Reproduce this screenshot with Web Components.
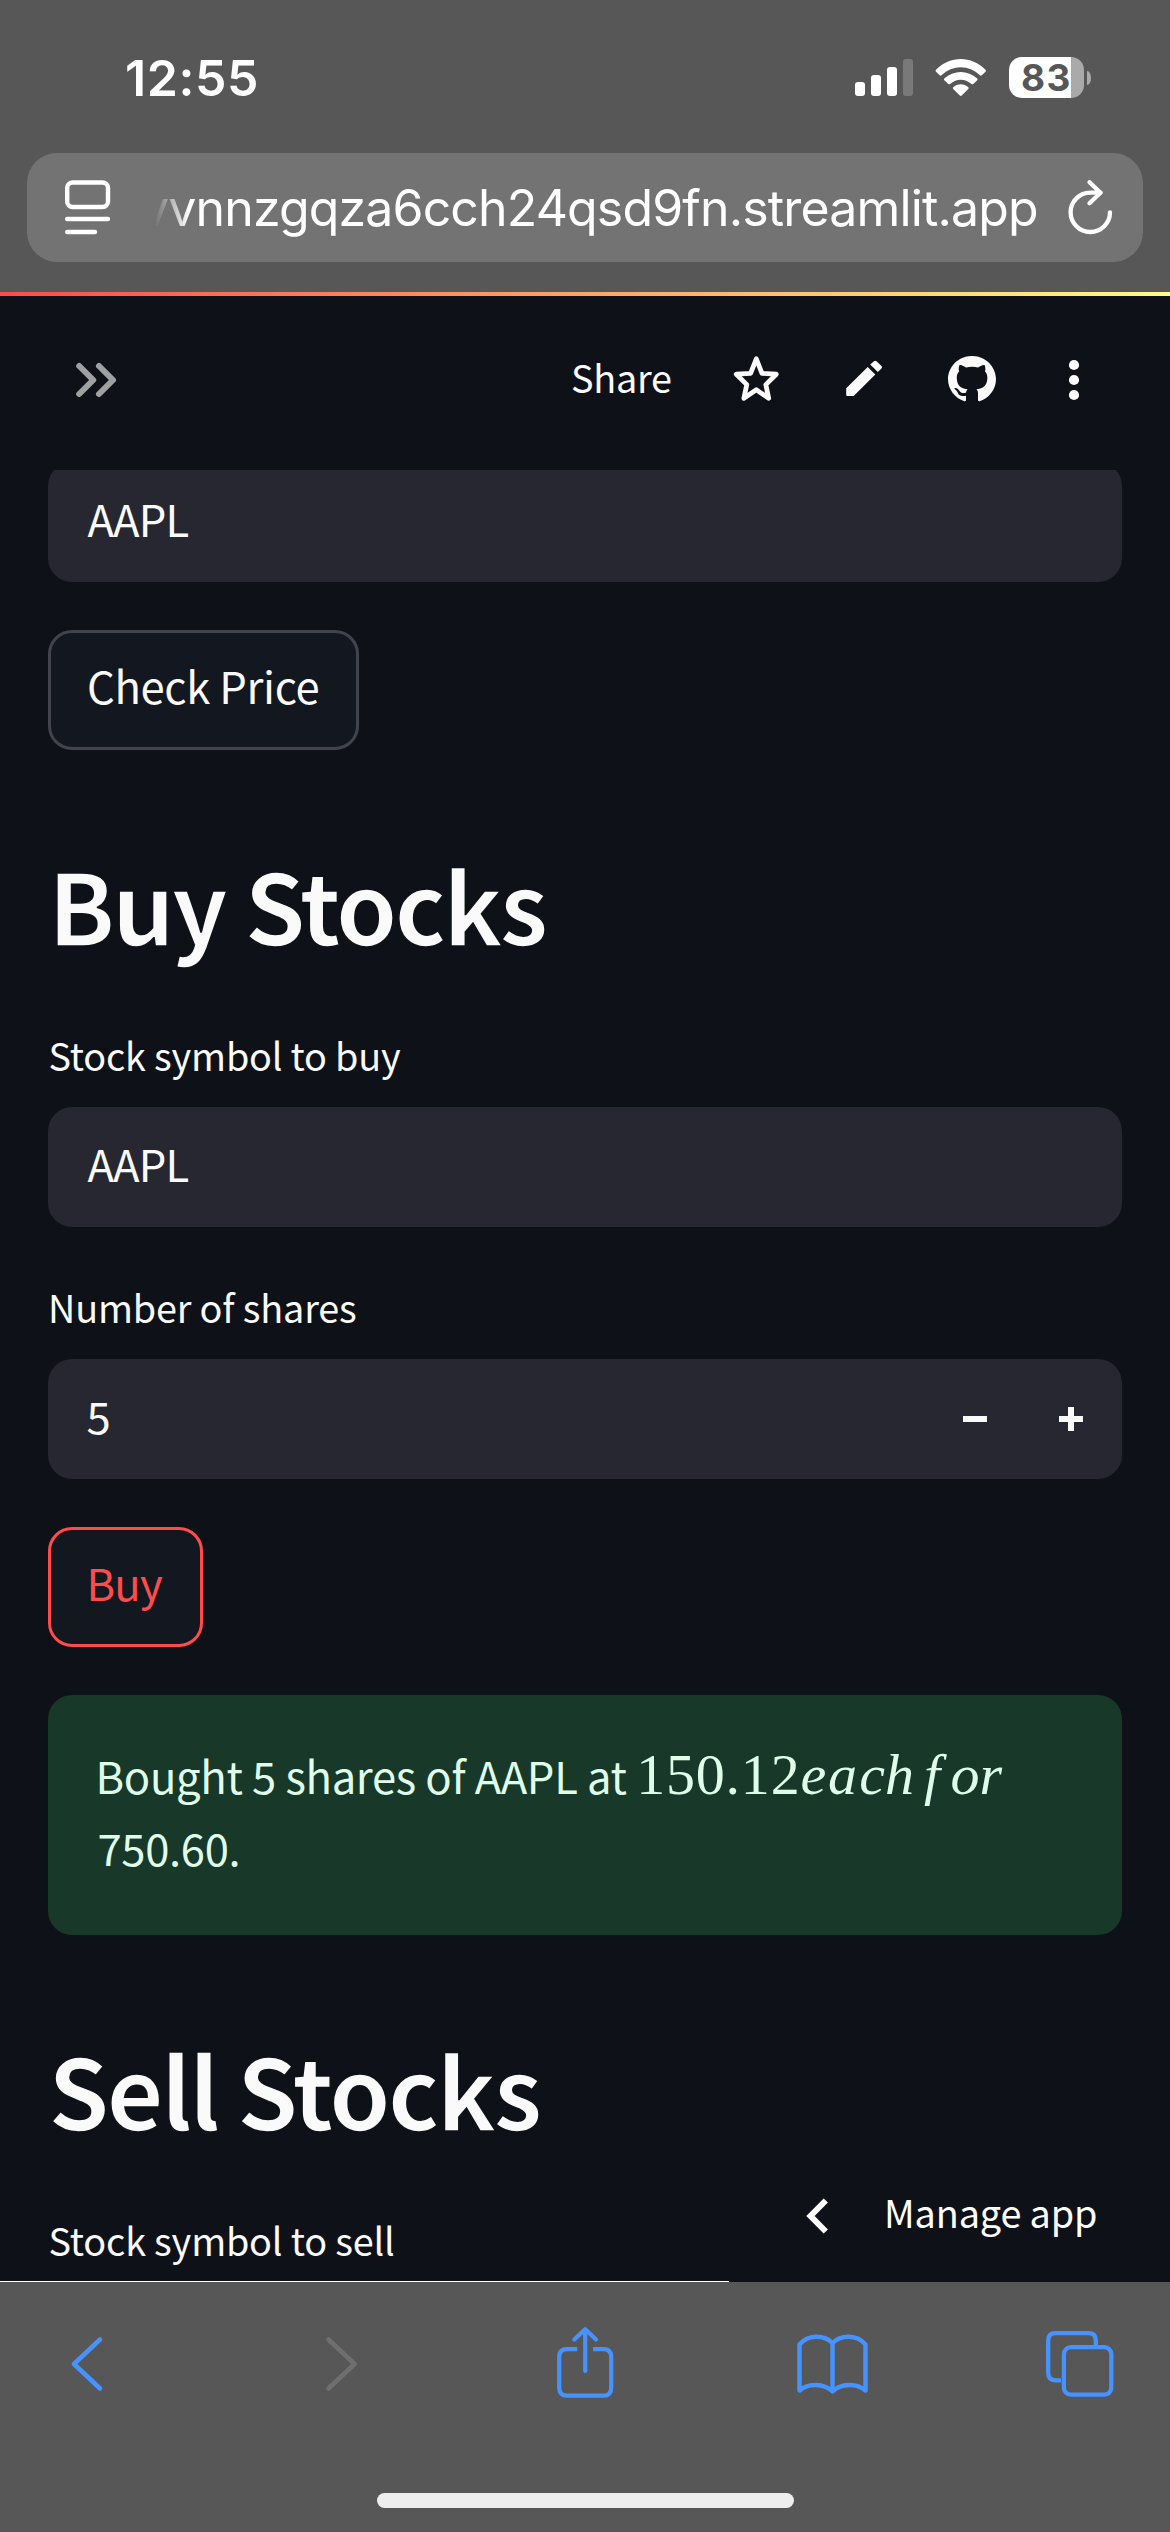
<!DOCTYPE html>
<html lang="en">
<head>
<meta charset="utf-8">
<title>Stock trading</title>
<style>
html,body{margin:0;padding:0;background:#0e1117}
body{width:1170px;height:2532px;overflow:hidden}
</style>
</head>
<body>
<phone-screen></phone-screen>
<script>
const SANS = '"Noto Sans CJK SC","Noto Sans CJK JP","Open Sans",sans-serif';
const define = (name, html, init) => {
  const t = document.createElement('template');
  t.innerHTML = html;
  customElements.define(name, class extends HTMLElement {
    connectedCallback() {
      if (this.shadowRoot) return;
      this.attachShadow({mode: 'open'}).append(t.content.cloneNode(true));
      if (init) init.call(this, this.shadowRoot);
    }
  });
};

/* Text run whose visible glyphs span exactly `ink` pixels from its left edge. */
define('ink-text', `<style>:host{display:block;white-space:pre;flex:none}</style><slot></slot>`, function () {
  const s = getComputedStyle(this), text = this.textContent, target = +this.getAttribute('ink');
  const c = document.createElement('canvas').getContext('2d');
  c.font = `${s.fontWeight} ${s.fontSize} ${s.fontFamily}`;
  const m = c.measureText(text);
  const natural = m.actualBoundingBoxLeft + m.actualBoundingBoxRight;
  if (text.length > 1) this.style.letterSpacing = ((target - natural) / (text.length - 1)).toFixed(3) + 'px';
  this.style.marginLeft = m.actualBoundingBoxLeft.toFixed(2) + 'px';
});

/* Icons: [viewBox, markup] */
const ICONS = {
  signal: ['856 58 58 39', `<g fill="#fff"><rect x="856" y="82" width="10" height="14" rx="3"/><rect x="872" y="75" width="10" height="21" rx="3"/><rect x="888" y="67" width="10" height="29" rx="3"/></g><rect x="904" y="59" width="10" height="37" rx="3" fill="#797979"/>`],
  wifi: ['936 58 52 39', `<g fill="#fff"><path d="M937 69.8C951 55.5 972.500 55.5 986.500 69.8Q987.300 70.800 986.500 71.700L982.800 75.300Q981.900 76 981 75.200C970 64.500 953.500 64.500 942.500 75.200Q941.600 76 940.700 75.300L937 71.700Q936.200 70.800 937 69.8Z"/><path d="M945.300 78.400C954.500 69.700 969 69.700 978.200 78.400Q979 79.300 978.200 80.200L974.300 84Q973.400 84.700 972.500 84C966 78.200 957.500 78.200 951 84Q950.100 84.700 949.200 84L945.300 80.200Q944.500 79.300 945.300 78.400Z"/><path d="M954.200 87.200C958.500 83.300 965 83.300 969.300 87.200Q970.100 88 969.300 89L962.700 95.500Q961.750 96.300 960.800 95.500L954.200 89Q953.400 88 954.200 87.200Z"/></g>`],
  reader: ['64 180 48 57', `<g fill="none" stroke="#fff" stroke-width="4.400" stroke-linecap="round"><rect x="67.200" y="183.500" width="40.800" height="24.500" rx="5.500"/><path d="M67.200 220H108M67.200 233H95"/></g>`],
  reload: ['1066 176 48 60', `<g fill="none" stroke="#fff" stroke-width="4.300" stroke-linecap="round" stroke-linejoin="round"><path d="M1110 210.300A19.700 19.700 0 1 1 1090.300 190.600H1100.500"/><path d="M1089.500 180.300 1100.500 190.800 1089.500 201.300"/></g>`],
  expand: ['74 360 44 40', `<path d="M79.200 366 93.200 380 79.200 394M99 366 113 380 99 394" fill="none" stroke="#9fa0a2" stroke-width="6" stroke-linecap="round" stroke-linejoin="round"/>`],
  star: ['732 354 49 52', `<path d="M756.300 358.800 762 373.400 776.300 374.200 765.800 384.600 768.700 398.300 756.300 389.800 743.900 398.300 746.800 384.600 736.300 374.200 750.600 373.400Z" fill="none" stroke="#fafafa" stroke-width="4.800" stroke-linejoin="round"/>`],
  pencil: ['844 358 40 44', `<path d="M846.200 388.300V394.800Q846.200 396 847.400 396H853.700L875.300 374.500 867.700 367ZM870.200 364.600 877.800 372.100 881.500 368.600Q882.700 367.300 881.500 366L876.500 361.300Q875.200 360.200 874 361.300Z" fill="#fafafa"/>`],
  github: ['0 0.2 16 16', `<path fill="#fafafa" transform="scale(1 .98)" d="M8 .2C3.58 .2 0 3.78 0 8.100c0 3.440 2.290 6.430 5.470 7.490.4.07.55-.17.55-.38 0-.19-.01-.82-.01-1.49-2.01.37-2.53-.49-2.69-.94-.09-.23-.48-.94-.82-1.13-.28-.15-.68-.52-.01-.53.63-.01 1.080.580 1.230.820.720 1.210 1.870.870 2.330.660.070-.520.280-.870.510-1.070-1.780-.200-3.640-.890-3.640-3.950 0-.870.310-1.590.820-2.150-.080-.200-.360-1.020.080-2.120 0 0 .670-.210 2.200.820.640-.180 1.320-.270 2-.270.680 0 1.360.090 2 .270 1.530-1.040 2.200-.820 2.200-.820.440 1.100.160 1.920.080 2.120.510.560.820 1.270.820 2.150 0 3.070-1.870 3.750-3.650 3.950.290.250.540.730.540 1.480 0 1.070-.010 1.930-.010 2.200 0 .210.150.460.550.380A8.013 8.013 0 0 0 16 8.100C16 3.780 12.420.200 8 .2z"/>`],
  more: ['1068 359 12 42', `<g fill="#fafafa"><circle cx="1074" cy="365" r="5.100"/><circle cx="1074" cy="380" r="5.100"/><circle cx="1074" cy="395" r="5.100"/></g>`],
  minus: ['0 0 24 24', `<path d="M0 9h24v6H0z" fill="#fafafa"/>`],
  plus: ['0 0 24 24', `<path d="M9 0h6v9h9v6h-9v9H9v-9H0V9h9z" fill="#fafafa"/>`],
  manage: ['806 2197 23 38', `<path d="M825.800 2200.500 810.500 2216 825.800 2231.500" fill="none" stroke="#fff" stroke-width="6"/>`],
  back: ['70 2335 34 58', `<path d="M100 2339.500 74 2364 100 2388.500" fill="none" stroke="#4693ff" stroke-width="4.600" stroke-linecap="round" stroke-linejoin="round"/>`],
  forward: ['325 2335 34 58', `<path d="M328.500 2339.500 354.500 2364 328.500 2388.500" fill="none" stroke="#6f6f6f" stroke-width="4.600" stroke-linecap="round" stroke-linejoin="round"/>`],
  share: ['555 2325 60 75', `<g fill="none" stroke="#4693ff" stroke-width="4.200" stroke-linejoin="round"><path d="M577.200 2349.200H567Q559.200 2349.200 559.200 2357V2388Q559.200 2395.700 567 2395.700H603.500Q611.200 2395.700 611.200 2388V2357Q611.200 2349.200 603.500 2349.200H593.100"/><path stroke-linecap="round" d="M585.200 2371V2329.500M574.300 2339.500 585.200 2329.300 596 2339.500"/></g>`],
  book: ['795 2332 75 63', `<path d="M832.500 2342C824 2333.500 808 2333.500 799.500 2343.500V2389.500C808 2382 824 2382 832.500 2390.500C841 2382 857 2382 865.500 2389.500V2343.500C857 2333.500 841 2333.500 832.500 2342ZV2390.500" fill="none" stroke="#4693ff" stroke-width="4.400" stroke-linejoin="round"/><path d="M832.500 2342V2390" stroke="#4693ff" stroke-width="4.400"/>`],
  tabs: ['1044 2329 72 70', `<g fill="none" stroke="#4693ff" stroke-width="4.300"><path d="M1061 2380.300H1055.500Q1048.200 2380.300 1048.200 2373V2340.500Q1048.200 2333.200 1055.500 2333.200H1088.500Q1095.800 2333.200 1095.800 2340.500V2346"/><rect x="1063.900" y="2347.200" width="47.400" height="47.500" rx="7"/></g>`]
};
ICONS.book[1] = ICONS.book[1].replace('ZV2390.500', 'Z');
define('ui-icon', `<style>:host{display:block;flex:none}svg{display:block}</style>`, function (root) {
  const [vb, body] = ICONS[this.getAttribute('name')];
  const size = this.getAttribute('size');
  const [, , w, h] = vb.split(' ');
  root.innerHTML += `<svg viewBox="${vb}" width="${size || w}" height="${size || h}">${body}</svg>`;
});

define('battery-level', `<style>
:host{display:flex;align-items:center;gap:3px}
.cell{box-sizing:border-box;width:75px;height:41px;padding-left:13px;border-radius:13px;background:linear-gradient(90deg,#fff 62px,#aaa 62px)}
ink-text{font:700 37px/41px Inter,sans-serif;color:#575757}
.tip{width:4px;height:14px;border-radius:0 4px 4px 0/0 7px 7px 0;background:#aaa}
</style><div class="cell"><ink-text ink="47.500">83</ink-text></div><div class="tip"></div>`);

define('status-bar', `<style>
:host{display:flex;justify-content:space-between;height:153px;padding:0 79px 0 127px;box-sizing:border-box}
ink-text{font:600 50px/120px Inter,sans-serif;color:#fff;margin-top:18px}
.right{display:flex;align-items:center;height:39px;margin-top:58px;gap:22px}
</style><ink-text ink="129">12:55</ink-text><div class="right"><ui-icon name="signal"></ui-icon><ui-icon name="wifi"></ui-icon><battery-level></battery-level></div>`);

define('address-bar', `<style>
:host{display:flex;align-items:center;box-sizing:border-box;height:109px;margin:0 27px;padding:0 29px 0 37px;border-radius:30px;background:#737373}
.url{flex:1;margin-left:43px;display:flex;justify-content:flex-end;overflow:hidden;margin-right:29px;height:109px;
-webkit-mask-image:linear-gradient(90deg,transparent,#000 34px);mask-image:linear-gradient(90deg,transparent,#000 34px)}
.pad{width:895px;flex:none}
ink-text{font:400 50px/110px Inter,sans-serif;color:#fff}
</style><ui-icon name="reader"></ui-icon><div class="url"><div class="pad"><ink-text ink="895">vvnnzgqza6cch24qsd9fn.streamlit.app</ink-text></div></div><ui-icon name="reload"></ui-icon>`);

define('browser-top', `<style>:host{display:block;height:292px;background:#575757}</style><status-bar></status-bar><address-bar></address-bar>`);

define('app-header', `<style>
:host{display:flex;align-items:center;box-sizing:border-box;height:178px;padding:0 90px 6px 74px;border-top:4px solid;border-image:linear-gradient(90deg,#ff4b4b,#fffd80) 4}
.actions{display:flex;align-items:center;margin-left:auto}
.share{width:160px;font:400 37.800px/73px ${SANS};color:#fafafa;height:80px}
.g1{margin-left:63px}.g2{margin-left:64px}.g3{margin-left:72px}
</style><ui-icon name="expand"></ui-icon><div class="actions"><div class="share"><ink-text ink="99">Share</ink-text></div><ui-icon name="star"></ui-icon><ui-icon class="g1" name="pencil"></ui-icon><ui-icon class="g2" name="github" size="48"></ui-icon><ui-icon class="g3" name="more"></ui-icon></div>`);

define('st-input', `<style>
:host{display:flex;justify-content:space-between;box-sizing:border-box;height:120px;border-radius:24px;background:#262730;padding:0 39px 0 39.500px;font:400 43.600px/112px ${SANS};color:#fafafa}
.steps{display:flex;align-items:center;gap:72px}
</style><slot></slot><div class="steps"><slot name="steps"></slot></div>`);

define('st-button', `<style>
:host{display:block;box-sizing:border-box;height:120px;border:3px solid var(--line,#41444c);border-radius:24px;background:#131720;padding-left:var(--x,38px);font:400 43.600px/105px ${SANS};color:var(--ink,#fafafa)}
</style><slot></slot>`);

define('st-heading', `<style>
:host{display:block;margin:88px 0 56px;padding-left:var(--x);font:600 98.500px/130px ${SANS};color:#fafafa;height:130px;-webkit-text-stroke:1.500px #0e1117}
</style><slot></slot>`);

define('st-label', `<style>
:host{display:block;height:60px;margin-bottom:23px;padding-left:var(--x,1.500px);font:400 37.800px/62px ${SANS};color:#fafafa}
</style><slot></slot>`);

define('st-alert', `<style>
:host{display:block;box-sizing:border-box;height:240px;margin-top:48px;padding:44px 48px 0 51.500px;border-radius:24px;background:#183829;font:400 43.600px/72px ${SANS};color:#dffde9}
</style><slot></slot>`);

define('tex-math', `<style>
:host{display:block;font:400 58px/58px "Liberation Serif","Times New Roman",serif;white-space:nowrap}
i{font-style:italic}
span{letter-spacing:.8px}
.e{letter-spacing:1.800px}.a{letter-spacing:2.200px}.c{letter-spacing:0}.h{letter-spacing:10px}.f{letter-spacing:10.500px}.o{letter-spacing:0}
</style><span>150.12</span><i class="e">e</i><i class="a">a</i><i class="c">c</i><i class="h">h</i><i class="f">f</i><i class="o">o</i><i>r</i>`);

define('manage-app', `<style>
:host{display:flex;box-sizing:border-box;width:440px;height:132px;background:#0e1117;padding:47px 0 0 76px;font:400 37.800px/60px ${SANS};color:#fff}
.label{margin-left:58px;margin-top:-15px}
</style><ui-icon name="manage"></ui-icon><div class="label"><ink-text ink="209">Manage app</ink-text></div>`);

define('st-app', `<style>
:host{display:block;position:relative;height:1812px;overflow:hidden;background:#0e1117}
main{display:flow-root;margin-top:-8px;padding:0 48px}
.btn{margin-top:48px}
.second{margin-top:49px}
.line{display:flex;align-items:baseline;height:72px}
tex-math{margin-left:9.500px}
.rule{position:absolute;left:0;bottom:0;width:729px;height:1px;background:#fff}
manage-app{position:absolute;right:0;bottom:0}
</style><main>
<st-input><ink-text ink="101">AAPL</ink-text></st-input>
<st-button class="btn" style="width:311px"><ink-text ink="229.500">Check Price</ink-text></st-button>
<st-heading style="--x:8px"><ink-text ink="489.500">Buy Stocks</ink-text></st-heading>
<st-label><ink-text ink="351.500">Stock symbol to buy</ink-text></st-label>
<st-input><ink-text ink="101">AAPL</ink-text></st-input>
<st-label class="second" style="--x:3px"><ink-text ink="305">Number of shares</ink-text></st-label>
<st-input><ink-text ink="21">5</ink-text><ui-icon slot="steps" name="minus"></ui-icon><ui-icon slot="steps" name="plus"></ui-icon></st-input>
<st-button class="btn" style="width:155px;--line:#ff4b4b;--ink:#ff4b4b;--x:39.500px"><ink-text ink="72.500">Buy</ink-text></st-button>
<st-alert><div class="line"><ink-text ink="527">Bought 5 shares of AAPL at</ink-text><tex-math></tex-math></div><div class="line"><ink-text ink="138">750.60.</ink-text></div></st-alert>
<st-heading style="--x:4px"><ink-text ink="487.500">Sell Stocks</ink-text></st-heading>
<st-label><ink-text ink="344.500">Stock symbol to sell</ink-text></st-label>
</main><manage-app></manage-app><div class="rule"></div>`);

define('browser-toolbar', `<style>
:host{display:flex;flex-direction:column;align-items:center;box-sizing:border-box;height:250px;background:#575757}
nav{display:flex;align-items:center;box-sizing:border-box;width:100%;height:164px;padding-left:70px}
.f{margin-left:221px}.s{margin:0 180px 3px 196px}.t{margin-left:174px}
.home{width:417px;height:15px;border-radius:8px;background:#eee;margin-top:47px}
</style><nav><ui-icon name="back"></ui-icon><ui-icon class="f" name="forward"></ui-icon><ui-icon class="s" name="share"></ui-icon><ui-icon name="book"></ui-icon><ui-icon class="t" name="tabs"></ui-icon></nav><div class="home"></div>`);

define('phone-screen', `<style>:host{display:flex;flex-direction:column;width:1170px;height:2532px;background:#0e1117}</style>
<browser-top></browser-top><app-header></app-header><st-app></st-app><browser-toolbar></browser-toolbar>`);
</script>
</body>
</html>
